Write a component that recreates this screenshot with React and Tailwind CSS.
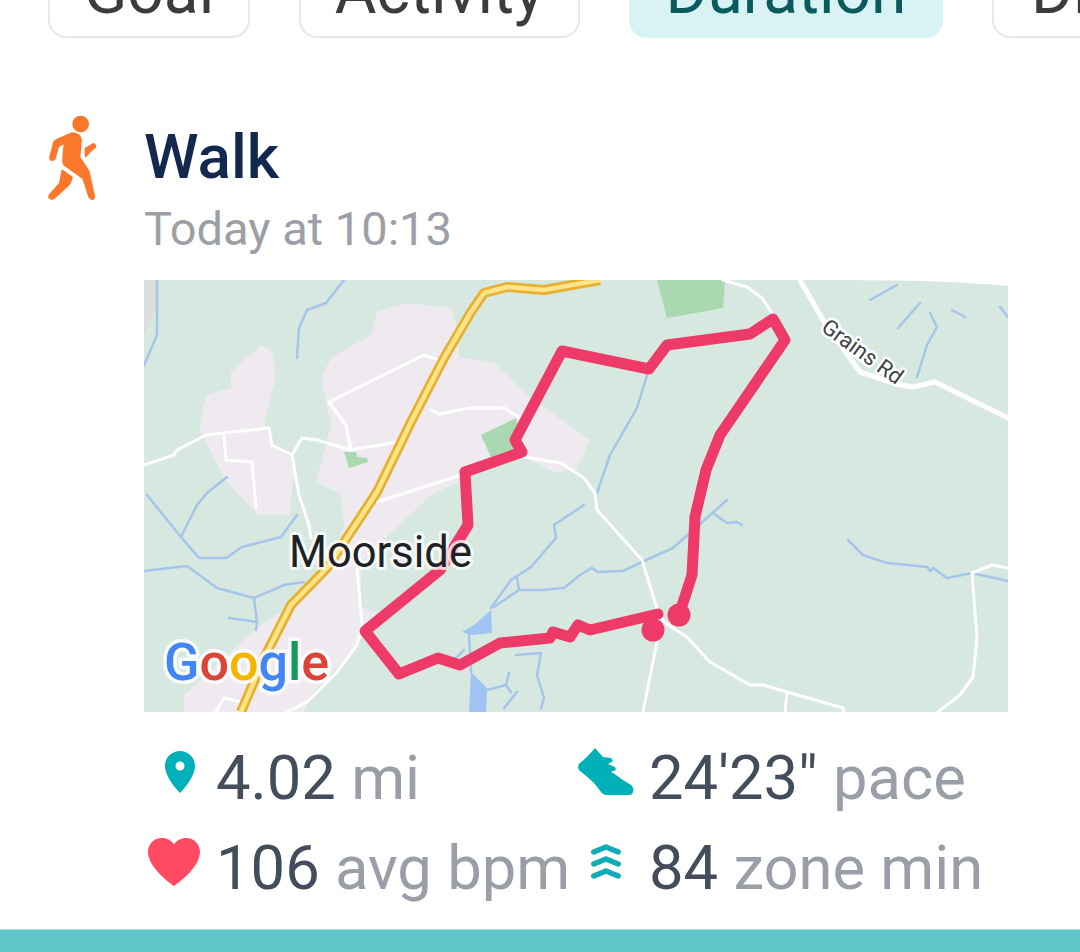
const roads = [
  "0,185 30,175 33,170 62,155 125,148 128,165 148,175 158,158 173,160 207,170 253,162",
  "80,155 82,180 108,182 112,228",
  "148,175 155,215 165,245 167,258",
  "297,81 280,75 185,122 202,145 207,170",
  "287,130 295,134 325,128 360,128 380,140",
  "380,177 417,183 440,198 451,213 453,230 498,280 514,332 521,343 543,357 566,382 606,405 619,405 643,412 699,428 700,432",
  "513,362 499,432",
  "643,412 641,432",
  "794,432 816,415 829,397 833,358 828,293 848,285 864,288",
  "579,0 603,7 618,18 628,33",
  "317,195 233,222",
  "213,288 218,345 213,365 193,392 163,422 143,432",
  "72,432 80,418 100,423",
];
const water = [
  "0,85 13,55 13,0",
  "200,0 182,23 163,30 155,48 153,78",
  "83,197 63,213 53,225 37,257",
  "3,215 37,257 55,278 82,278 98,267 137,257 153,235",
  "0,291 43,286 73,308 110,318 140,305 160,302",
  "110,318 113,342 112,350",
  "85,338 113,342",
  "504,92 493,128 466,175 453,213",
  "440,225 410,245 412,258 387,287 367,300 347,328",
  "373,298 375,310 350,327",
  "375,310 397,310 420,308 436,295 448,288 454,292 479,291 498,282 529,268 546,253 583,220",
  "569,233 583,243 593,242 598,245",
  "704,260 719,275 743,283 783,287 786,291 789,288 803,298 828,293 864,301",
  "325,355 327,392",
  "312,378 320,370",
  "372,375 397,373 393,395 400,418 397,428",
  "343,410 362,405 367,412",
  "365,393 362,405",
  "373,412 360,428",
  "726,20 753,5",
  "754,48 776,23",
  "786,33 793,47 783,65 773,97",
  "808,30 821,37",
  "856,27 864,37",
];
const route =
  "535,335 548,295 551,237 562,190 576,155 641,60 629,39 606,54 523,65 505,89 418,71 371,160 378,172 321,192 324,245 296,290 221,351 255,394 294,378 316,385 356,363 406,358 409,352 426,357 434,345 446,350 514,334";
const highway =
  "456,0 400,10 363,7 340,13 327,32 300,78 267,142 233,212 183,288 147,325 120,378 97,432";

function RouteMap() {
  return (
    <svg viewBox="0 0 864 432" className="block w-[864px] h-[432px] [font-family:Roboto,sans-serif]">
      <rect width="864" height="432" fill="#d6e8df" />
      <path d="M0 0H12V30L0 55Z" fill="#d9dedd" />
      <g fill="#efeaf0">
        <path d="M117 65 128 72 132 95 120 142 128 165 151 180 146 235 114 235 81 200 56 150 57 135 63 115 87 108 87 92Z" />
        <path d="M263 23 307 28 312 45 315 77 350 83 383 115 446 160 432 190 410 192 380 177 340 190 287 215 217 282 217 328 233 332 213 365 167 415 160 432 40 432 40 415 113 348 147 325 187 282 200 245 197 215 172 202 187 145 177 98 187 78 227 55 233 32Z" />
      </g>
      <g fill="#a9d8b1">
        <path d="M513 0H581L579 28 523 38Z" />
        <path d="M337 155 372 138 380 172 347 177Z" />
        <path d="M200 172 212 172 213 177 223 178 224 182 205 188Z" />
      </g>
      <g fill="#9fc3f3">
        <path d="M318 352 330 345 347 330 348 353 327 355Z" />
        <path d="M327 392 343 408 342 432H325Z" />
      </g>
      <g fill="none" stroke="#a5c5ea" strokeWidth="2.5" strokeLinejoin="round" strokeLinecap="round">
        {water.map((p) => (
          <polyline key={p} points={p} />
        ))}
      </g>
      <g fill="none" stroke="#ffffff" strokeWidth="3" strokeLinejoin="round" strokeLinecap="round">
        {roads.map((p) => (
          <polyline key={p} points={p} />
        ))}
        <polyline points="656,0 679,40 716,92 756,105 769,107 791,102 864,138" strokeWidth="5" />
      </g>
      <polyline points={highway} fill="none" stroke="#e8b030" strokeWidth="10" strokeLinejoin="round" />
      <polyline points={highway} fill="none" stroke="#ffe48a" strokeWidth="4.5" strokeLinejoin="round" />
      <path d="M700 0Q800 0 864 6V0Z" fill="#ffffff" />
      <text
        x="676"
        y="50"
        transform="rotate(36 676 50)"
        fontSize="22"
        fill="#3f4348"
        stroke="#ffffff"
        strokeWidth="5"
        paintOrder="stroke"
        strokeLinejoin="round"
      >
        Grains Rd
      </text>
      <polyline points={route} fill="none" stroke="#ee3a69" strokeWidth="11" strokeLinejoin="round" strokeLinecap="round" />
      <circle cx="535" cy="335" r="11.5" fill="#ee3a69" />
      <circle cx="509" cy="350" r="11.5" fill="#ee3a69" />
      <text
        x="145"
        y="287"
        fontSize="43.500"
        fill="#202124"
        stroke="#ffffff"
        strokeOpacity="0.75"
        strokeWidth="6"
        paintOrder="stroke"
        strokeLinejoin="round"
      >
        Moorside
      </text>
      <text
        x="20"
        y="400"
        fontSize="52"
        fontWeight="500"
        stroke="#ffffff"
        strokeOpacity="0.8"
        strokeWidth="7"
        paintOrder="stroke"
        strokeLinejoin="round"
      >
        <tspan fill="#4285f4">G</tspan>
        <tspan fill="#db4437">o</tspan>
        <tspan fill="#f4b400">o</tspan>
        <tspan fill="#4285f4">g</tspan>
        <tspan fill="#0f9d58">l</tspan>
        <tspan fill="#db4437">e</tspan>
      </text>
    </svg>
  );
}

function Walker() {
  return (
    <svg
      viewBox="0 0 270 360"
      className="block w-[90px] h-[120px] shrink-0"
      fill="#fb772b"
      stroke="#fb772b"
      strokeWidth="6"
      strokeLinejoin="round"
    >
      <circle cx="152" cy="72" r="22" />
      <path d="M125 100Q150 100 153 120L148 172L176 215L192 288Q193 296 186 297Q181 297 178 290L160 235L102 193Q98 185 100 170L104 128L85 138L74 176Q70 182 63 179Q59 176 61 170L72 128Q74 122 82 119Z" />
      <path d="M97 212L125 232Q122 250 112 258L72 294Q63 299 58 292Q56 288 60 284L90 250Z" />
      <path d="M167 146L190 132Q196 134 196 140L180 154L167 168Z" />
    </svg>
  );
}

function Pin() {
  return (
    <svg viewBox="0 0 30 42" className="block w-[30px] h-[42px] ml-[21px] mt-[3px]">
      <path
        fillRule="evenodd"
        fill="#00b0b9"
        d="M15 0C6.7 0 0 6.6 0 15C0 24 9 36 15 42C21 36 30 24 30 15C30 6.6 23.3 0 15 0ZM15 10.500A4.500 4.500 0 1 1 15 19.500A4.500 4.500 0 1 1 15 10.500Z"
      />
    </svg>
  );
}

function Heart() {
  return (
    <svg viewBox="0 0 52 48" className="block w-[52px] h-[48px] ml-[4px]">
      <path
        fill="#ff4a63"
        d="M26 48C24.500 47 0 30 0 14C0 6 6 0 14 0C19 0 23.500 2.500 26 6.500C28.500 2.500 33 0 38 0C46 0 52 6 52 14C52 30 27.500 47 26 48Z"
      />
    </svg>
  );
}

function Shoe() {
  return (
    <svg viewBox="0 0 56 48" className="block w-[56px] h-[48px] ml-[1px]">
      <path
        fill="#00b0b9"
        d="M17 0L25 9L33 10L35 13L30 16L37 19L38 22L33 24L38 27L45 32L53 37C55 39 56 41 55 44C54 47 52 47 49 47L28 47C25 47 23 44 20 40C15 33 8 28 2 23C-1 20 0 17 2 15C7 11 12 6 17 0Z"
      />
    </svg>
  );
}

function Zone() {
  return (
    <svg
      viewBox="0 0 30 36"
      className="block w-[30px] h-[36px] ml-[14px] mt-[6px]"
      fill="none"
      stroke="#11adb7"
      strokeWidth="5.500"
      strokeLinecap="round"
      strokeLinejoin="round"
    >
      <path d="M2.800 8L15 3L27.200 8" />
      <path d="M2.800 20L15 15L27.200 20" />
      <path d="M2.800 32L15 27L27.200 32" />
    </svg>
  );
}

function Stat({ icon, value, unit }) {
  return (
    <div className="flex items-start">
      <div className="w-[72px] shrink-0">{icon}</div>
      <div className="text-[61.5px] leading-[60px] whitespace-nowrap">
        <span className="text-[#434d5c]">{value}</span>{" "}
        <span className="text-[#9a9fa7]">{unit}</span>
      </div>
    </div>
  );
}

function Chip({ label, width, active }) {
  return (
    <div
      className={
        active
          ? "h-[70px] shrink-0 flex items-end justify-center rounded-[18px] border-2 border-[#d9f2f3] bg-[#d9f2f3] pb-[13px] text-[#0b5a5e]"
          : "h-[70px] shrink-0 flex items-end justify-center rounded-[18px] border-2 border-[#e8e8e8] bg-white pb-[13px] text-[#3c3c3c]"
      }
      style={{ width }}
    >
      <span className="text-[64px] leading-[62px] whitespace-nowrap">{label}</span>
    </div>
  );
}

export default function App() {
  return (
    <div className="w-[1080px] h-[952px] overflow-hidden bg-white flex flex-col [font-family:Roboto,sans-serif]">
      <div className="h-[38px] shrink-0 flex items-end gap-[49px] pl-[48px] overflow-hidden">
        <Chip label="Goal" width={202} />
        <Chip label="Activity" width={281} />
        <Chip label="Duration" width={314} active />
        <div className="h-[70px] w-[300px] shrink-0 flex items-end rounded-[18px] border-2 border-[#e8e8e8] bg-white pb-[13px] pl-[37px] text-[#3c3c3c]">
          <span className="text-[64px] leading-[62px] whitespace-nowrap">Distance</span>
        </div>
      </div>
      <div className="flex pl-[30px] mt-[62px]">
        <Walker />
        <div className="ml-[24px] pt-[27px] w-[864px]">
          <div className="text-[62px] leading-[60px] font-medium text-[#12284f]">Walk</div>
          <div className="mt-[19px] text-[47px] leading-[46px] text-[#9ca0a6]">Today at 10:13</div>
          <div className="mt-[28px]">
            <RouteMap />
          </div>
          <div className="mt-[36px] grid grid-cols-[433px_1fr] gap-y-[30px]">
            <Stat icon={<Pin />} value="4.02" unit="mi" />
            <Stat icon={<Shoe />} value={`24'23"`} unit="pace" />
            <Stat icon={<Heart />} value="106" unit="avg bpm" />
            <Stat icon={<Zone />} value="84" unit="zone min" />
          </div>
        </div>
      </div>
      <div className="mt-auto h-[23px] shrink-0 bg-[#5fc6ca] border-t border-[#a5dfe1]" />
    </div>
  );
}
